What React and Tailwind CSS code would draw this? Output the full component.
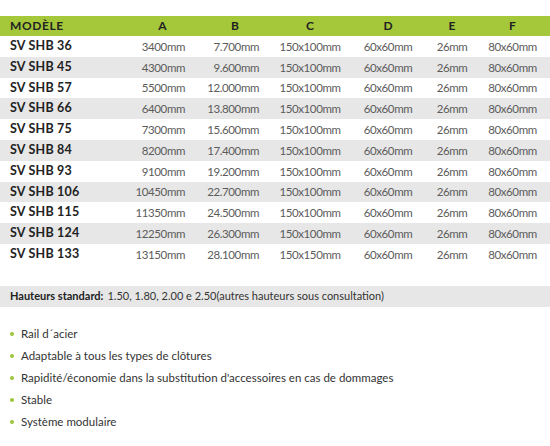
const rows = [
  ["SV SHB 36", "3400mm", "7.700mm", "150x100mm"],
  ["SV SHB 45", "4300mm", "9.600mm", "150x100mm"],
  ["SV SHB 57", "5500mm", "12.000mm", "150x100mm"],
  ["SV SHB 66", "6400mm", "13.800mm", "150x100mm"],
  ["SV SHB 75", "7300mm", "15.600mm", "150x100mm"],
  ["SV SHB 84", "8200mm", "17.400mm", "150x100mm"],
  ["SV SHB 93", "9100mm", "19.200mm", "150x100mm"],
  ["SV SHB 106", "10450mm", "22.700mm", "150x100mm"],
  ["SV SHB 115", "11350mm", "24.500mm", "150x100mm"],
  ["SV SHB 124", "12250mm", "26.300mm", "150x100mm"],
  ["SV SHB 133", "13150mm", "28.100mm", "150x150mm"],
];

const features = [
  "Rail d´acier",
  "Adaptable à tous les types de clôtures",
  "Rapidité/économie dans la substitution d'accessoires en cas de dommages",
  "Stable",
  "Système modulaire",
];

export default function App() {
  return (
    <div className="w-[550px] h-[446px] bg-white pt-4 text-[11px] font-['Lato',sans-serif] overflow-hidden">

      {/* TABLE HEADER */}
      <div className="flex h-5 items-center bg-[#a5c83b] font-bold text-[12px] text-[#222]">
        <div className="w-[135px] pl-[10px] tracking-[0.6px]">MODÈLE</div>
        <div className="w-[55px] text-center">A</div>
        <div className="w-[80px] pl-[10px] text-center">B</div>
        <div className="w-[80px] text-center">C</div>
        <div className="w-[76px] text-center">D</div>
        <div className="w-[52px] text-center">E</div>
        <div className="w-[69px] text-center">F</div>
      </div>

      {/* ROWS */}
      {rows.map((r, i) => (
        <div
          key={r[0]}
          className={`flex h-[20.8px] items-center text-[11.5px] text-[#5c5c5c] tracking-[-0.4px] ${i % 2 === 1 ? "bg-[#e7e7e7]" : "bg-white"}`}
        >
          <div className="w-[135px] pl-[10px] text-[12.5px] font-bold tracking-[0.2px] text-[#222]">{r[0]}</div>
          <div className="w-[55px] pr-[5px] text-right">{r[1]}</div>
          <div className="w-[80px] pr-[11px] text-right">{r[2]}</div>
          <div className="w-[80px] text-center">{r[3]}</div>
          <div className="w-[76px] text-center">60x60mm</div>
          <div className="w-[52px] text-center">26mm</div>
          <div className="w-[69px] text-center">80x60mm</div>
        </div>
      ))}

      {/* HAUTEURS */}
      <div className="mt-[21px] flex h-[21px] items-center bg-[#e7e7e7] pl-[10px] text-[#333]">
        <span className="font-bold text-[#222]">Hauteurs standard:</span>
        <span className="ml-1">1.50, 1.80, 2.00 e 2.50(autres hauteurs sous consultation)</span>
      </div>

      {/* LISTE */}
      <ul className="mt-4 text-[11.5px] text-[#333]">
        {features.map(f => (
          <li key={f} className="flex h-[22px] items-center">
            <span className="ml-[10px] mr-[7px] h-[4px] w-[4px] rounded-full bg-[#9cc43c]" />
            {f}
          </li>
        ))}
      </ul>

    </div>
  );
}
